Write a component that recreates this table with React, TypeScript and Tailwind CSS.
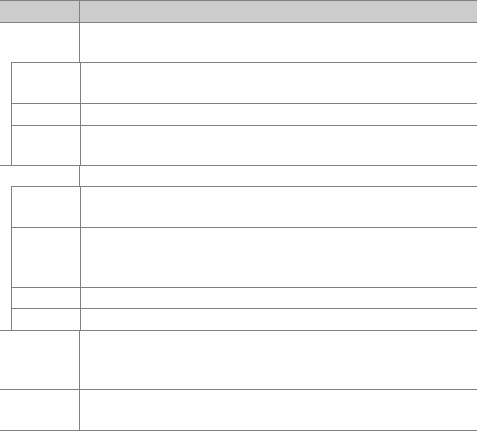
const border = "border-[#808080]"

function Row({ h, nested = false, last = false }: { h: string; nested?: boolean; last?: boolean }) {
  return (
    <div className={`flex ${h} ${last ? "" : `border-b ${border}`}`}>
      <div className={`${nested ? "w-[69px]" : "w-[80px]"} shrink-0 border-r ${border}`} />
      <div className="flex-1" />
    </div>
  )
}

function Nested({ heights }: { heights: string[] }) {
  return (
    <div className="pl-[11px]">
      <div className={`border-t border-l ${border}`}>
        {heights.map((h, i) => (
          <Row key={i} h={h} nested last={i === heights.length - 1} />
        ))}
      </div>
    </div>
  )
}

export default function App() {
  return (
    <div className="w-[477px] bg-white font-['Liberation_Sans',sans-serif]">
      <div className={`flex h-[23px] border-t border-b bg-[#cccccc] ${border}`}>
        <div className={`w-[80px] shrink-0 border-r ${border}`} />
        <div className="flex-1" />
      </div>

      <div className={`border-b ${border}`}>
        <Row h="h-[39px]" last />
        <Nested heights={["h-[41px]", "h-[22px]", "h-[39px]"]} />
      </div>

      <div className={`border-b ${border}`}>
        <Row h="h-[20px]" last />
        <Nested heights={["h-[41px]", "h-[60px]", "h-[21px]", "h-[21px]"]} />
      </div>

      <Row h="h-[59px]" />
      <Row h="h-[41px]" />
    </div>
  )
}
